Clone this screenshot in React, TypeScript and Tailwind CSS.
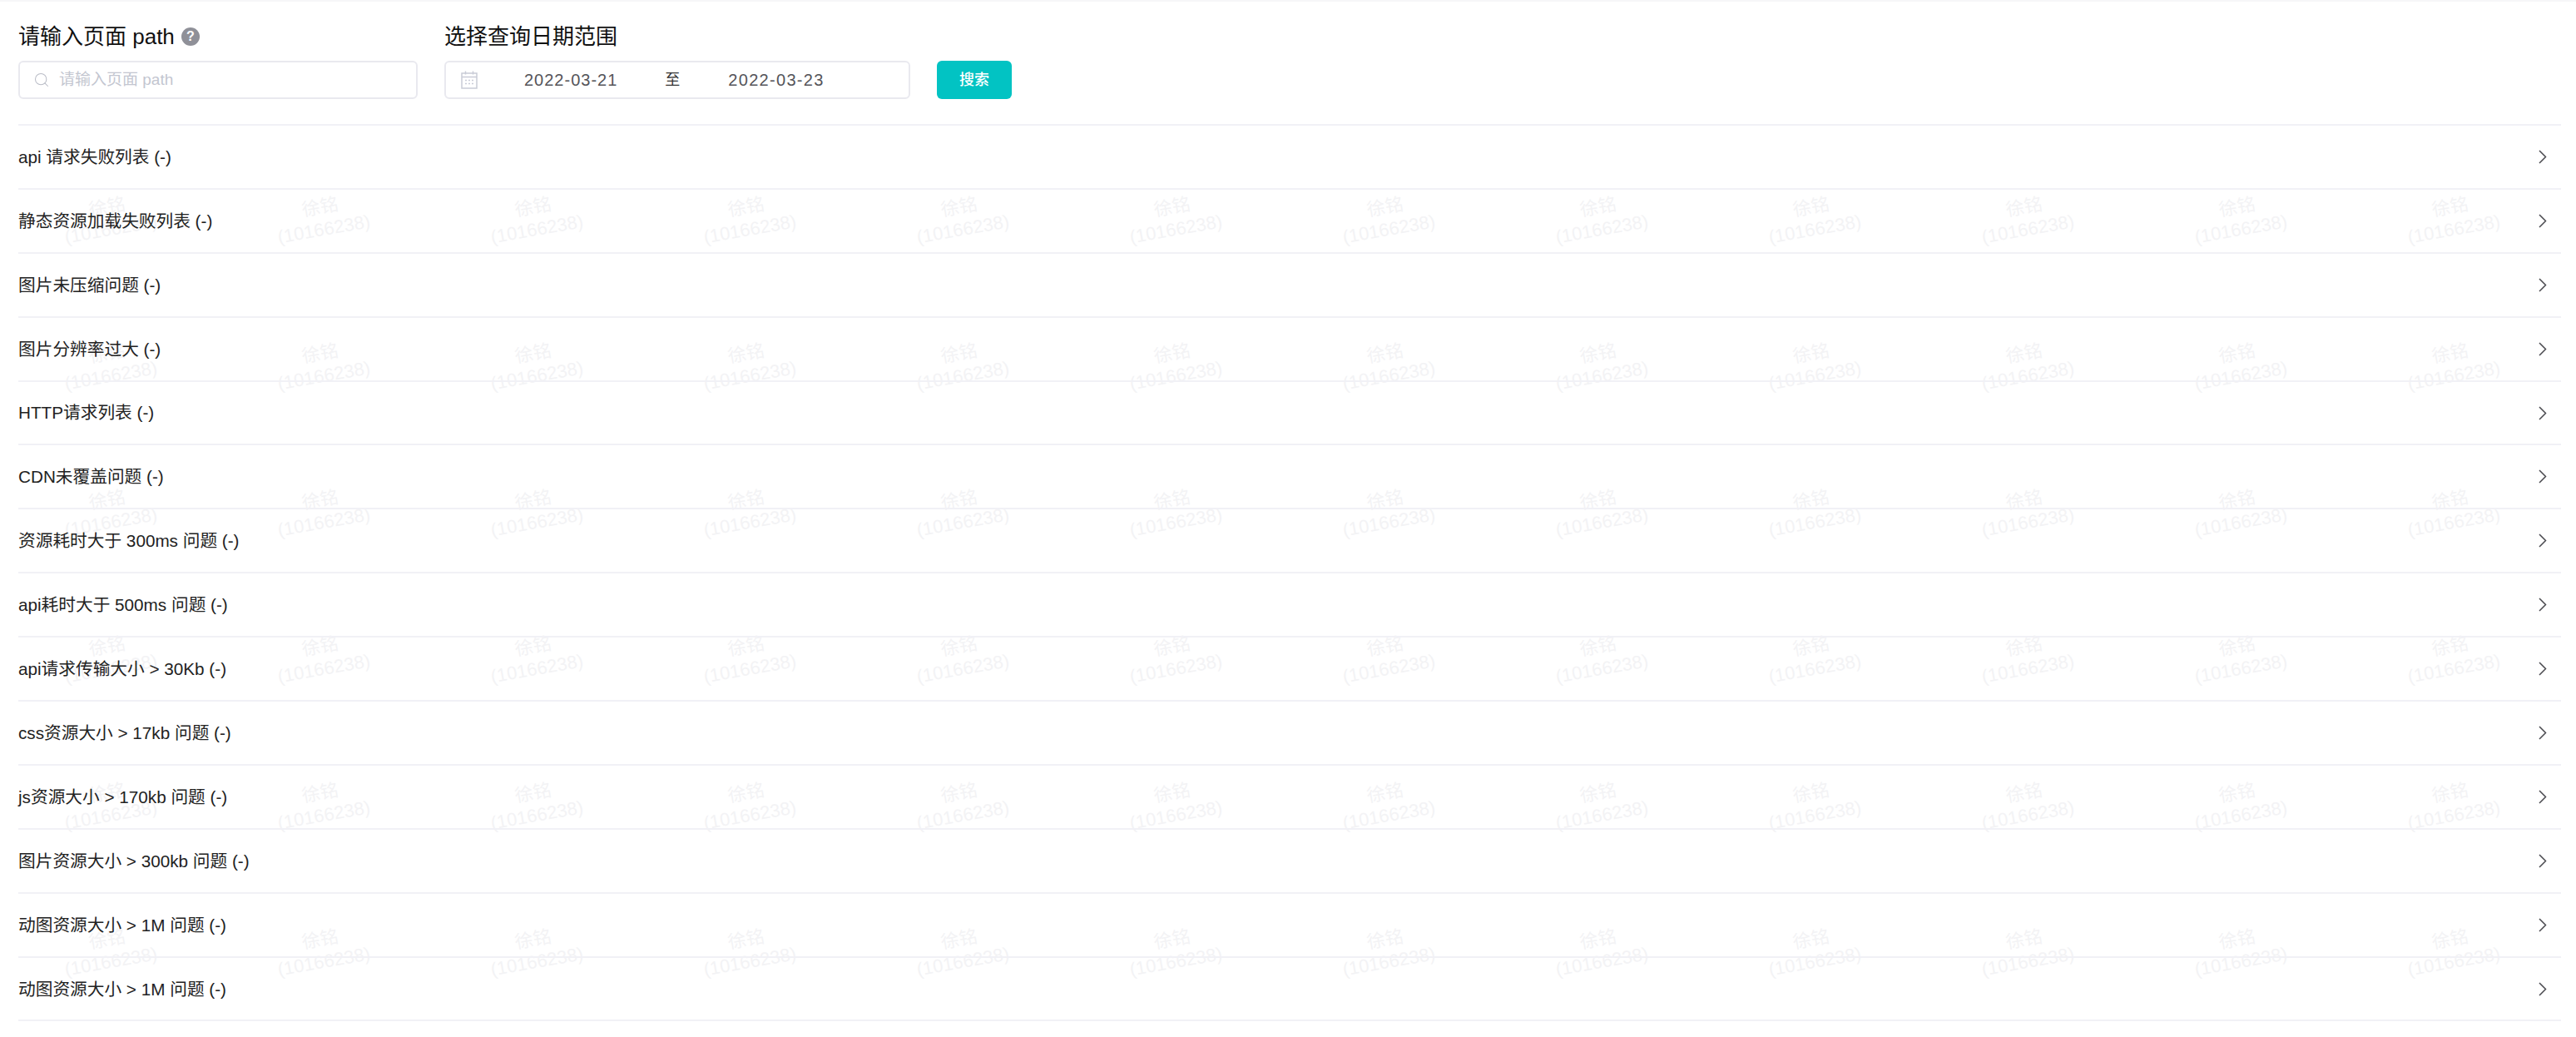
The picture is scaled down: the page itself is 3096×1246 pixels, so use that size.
import { Search } from "lucide-react";

const rows = [
  "api 请求失败列表 (-)",
  "静态资源加载失败列表 (-)",
  "图片未压缩问题 (-)",
  "图片分辨率过大 (-)",
  "HTTP请求列表 (-)",
  "CDN未覆盖问题 (-)",
  "资源耗时大于 300ms 问题 (-)",
  "api耗时大于 500ms 问题 (-)",
  "api请求传输大小 > 30Kb (-)",
  "css资源大小 > 17kb 问题 (-)",
  "js资源大小 > 170kb 问题 (-)",
  "图片资源大小 > 300kb 问题 (-)",
  "动图资源大小 > 1M 问题 (-)",
  "动图资源大小 > 1M 问题 (-)",
];

const marks = Array.from({ length: 72 }, (_, i) => i);

function CalendarIcon() {
  return (
    <svg width="20" height="22" viewBox="0 0 20 22" fill="none" stroke="#c9ccd6" strokeWidth="1.5">
      <rect x="1" y="3" width="18" height="18" />
      <path d="M1 7.5h18M5.5 0.5v4M14.5 0.5v4" />
      <path d="M5 11.5h10M5 15.5h10" strokeDasharray="2 2" />
    </svg>
  );
}

function Chevron() {
  return (
    <svg width="10" height="17" viewBox="0 0 10 17" fill="none" stroke="#4a4a4f" strokeWidth="1.5">
      <path d="M1 1l7.5 7.5L1 16" />
    </svg>
  );
}

export default function App() {
  return (
    <div className="relative h-[1246px] w-[3096px] overflow-hidden border-t-2 border-[#f6f6f8] bg-white font-['Liberation_Sans','Noto_Sans_CJK_SC',sans-serif] text-[#222]">
      <div className="pointer-events-none absolute left-[3px] top-[172px] grid grid-cols-[repeat(12,256px)] auto-rows-[176px]">
        {marks.map((i) => (
          <div key={i} className="flex -rotate-[10deg] flex-col items-center justify-center text-[22px] leading-[27px] text-[#f3f3f5]">
            <span>徐铭</span>
            <span>(10166238)</span>
          </div>
        ))}
      </div>

      <div className="relative pl-[22px] pr-[18px]">
        <div className="flex h-[149px] items-start border-b-2 border-[#f1f1f6] pt-[26px]">
          <div className="w-[480px]">
            <div className="flex h-[32px] items-center gap-[8px] text-[26px] leading-[32px] text-[#111]">
              <span>请输入页面 path</span>
              <span className="flex size-[22px] items-center justify-center rounded-full bg-[#8f9098] text-[16px] font-bold leading-none text-white">?</span>
            </div>
            <div className="mt-[13px] flex h-[46px] items-center gap-[11px] rounded-[6px] border-2 border-[#e9e9ef] pl-[16px] text-[19px] text-[#c3c6d0]">
              <Search size={20} strokeWidth={1.25} color="#b9bcc6" />
              <span>请输入页面 path</span>
            </div>
          </div>

          <div className="ml-[32px] w-[560px]">
            <div className="h-[32px] text-[26px] leading-[32px] text-[#111]">选择查询日期范围</div>
            <div className="mt-[13px] flex h-[46px] items-center rounded-[6px] border-2 border-[#e9e9ef] pl-[18px] text-[20px] tracking-[1px] text-[#55555a]">
              <CalendarIcon />
              <span className="ml-[56px]">2022-03-21</span>
              <span className="ml-[57px] text-[18px] tracking-normal text-[#333]">至</span>
              <span className="ml-[58px] tracking-[1.3px]">2022-03-23</span>
            </div>
          </div>

          <button className="ml-[32px] mt-[45px] h-[46px] w-[90px] rounded-[6px] bg-[#02c3c3] text-[18px] font-medium text-white">搜索</button>
        </div>

        <div>
          {rows.map((r, i) => (
            <div key={i} className="flex h-[76.9px] items-center justify-between border-b-2 border-[#f1f1f6] pr-[17px] text-[20.7px] text-[#222]">
              <span>{r}</span>
              <Chevron />
            </div>
          ))}
        </div>
      </div>
    </div>
  );
}
